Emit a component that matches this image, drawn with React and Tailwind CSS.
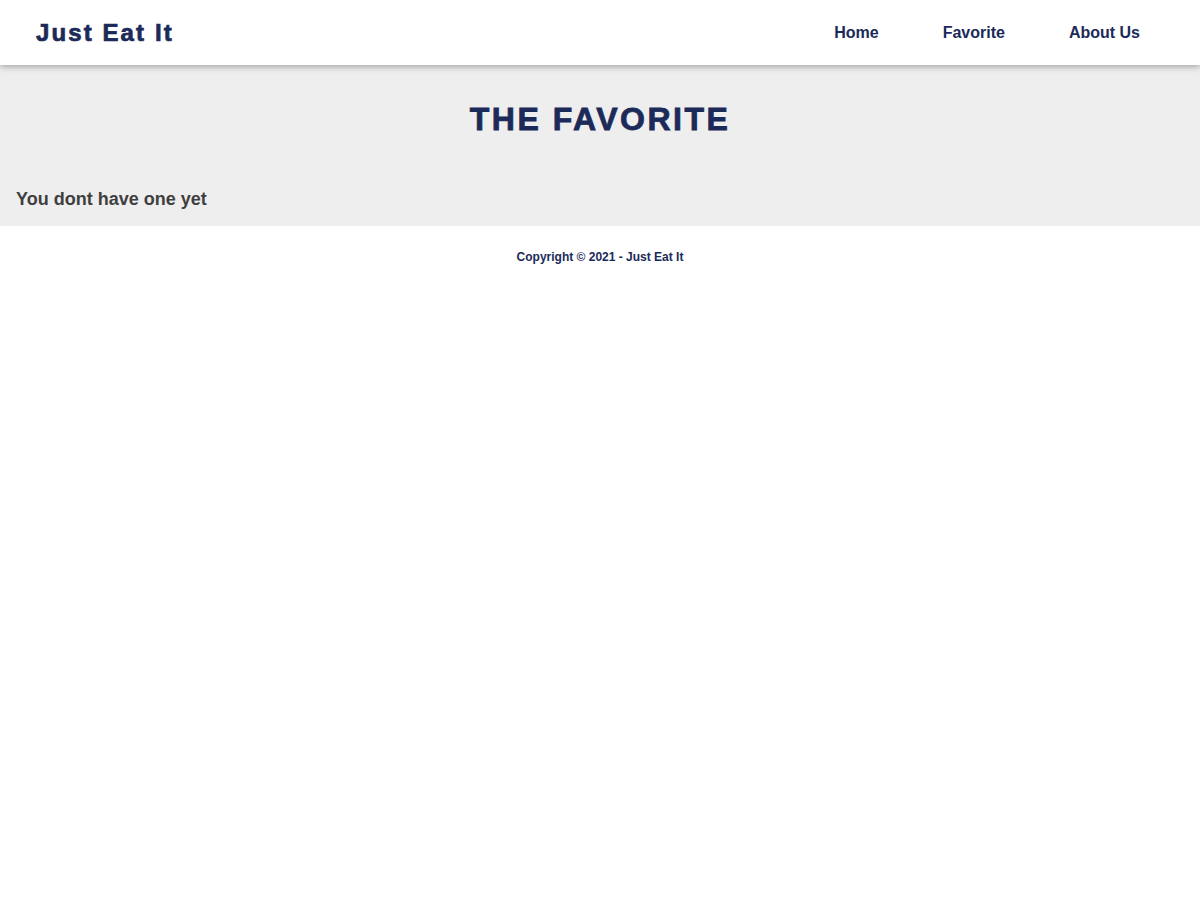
const NAVY = 'text-[#1b2a58]'

const LINKS = ['Home', 'Favorite', 'About Us']

function Header() {
  return (
    <header className="relative z-10 flex h-[65px] items-center justify-between bg-white pl-9 pr-[60px] shadow-[0_2px_6px_rgba(0,0,0,0.3)]">
      <a
        href="#"
        className={`text-[24px] font-bold tracking-[2.1px] [-webkit-text-stroke:0.7px_#1b2a58] ${NAVY}`}
      >
        Just Eat It
      </a>
      <nav className="flex gap-16">
        {LINKS.map((l) => (
          <a key={l} href="#" className={`text-[16px] font-bold ${NAVY}`}>
            {l}
          </a>
        ))}
      </nav>
    </header>
  )
}

export default function App() {
  return (
    <div className="min-h-screen bg-white font-['Liberation_Sans',Arial,sans-serif]">
      <Header />
      <main className="bg-[#eeeeee] px-4 pt-[36px] pb-[16px]">
        <h1
          className={`text-center text-[32px] leading-[37px] font-bold tracking-[2.5px] [-webkit-text-stroke:0.8px_#1b2a58] ${NAVY}`}
        >
          THE FAVORITE
        </h1>
        <p className="mt-[51px] text-[18px] leading-[21px] font-bold text-[#3f3f3f]">
          You dont have one yet
        </p>
      </main>
      <footer className={`pt-6 text-center text-[12px] leading-[14px] font-bold ${NAVY}`}>
        Copyright © 2021 - Just Eat It
      </footer>
    </div>
  )
}
